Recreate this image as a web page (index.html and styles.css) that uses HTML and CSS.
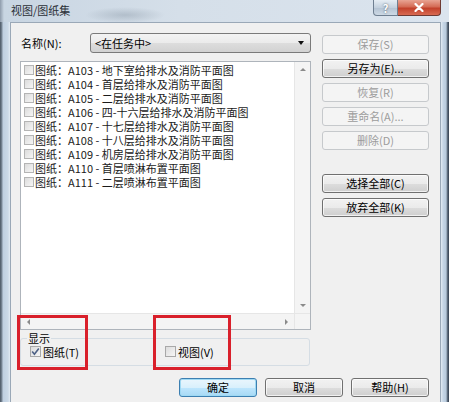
FILE: index.html
```html
<!DOCTYPE html>
<html lang="zh-CN">
  <head>
    <meta charset="UTF-8" />
    <title>视图/图纸集</title>
    <link rel="stylesheet" href="styles.css">
  </head>
  <body>
    <div class="window">
      <div class="titlebar">
        <span class="title">视图/图纸集</span>
        <div class="caption-buttons">
          <span class="cap-btn cap-help">?</span>
          <span class="cap-btn cap-close">
            <svg width="10" height="9" viewBox="0 0 10 9">
              <path d="M1.5 1 L8.5 8 M8.5 1 L1.5 8" stroke="#fff" stroke-width="2.2" stroke-linecap="round" />
            </svg>
          </span>
        </div>
      </div>

      <div class="frame">
        <div class="frame-left"></div>

        <div class="client">
          <div class="main">
            <div class="left-col">
              <div class="name-row">
                <label class="name-label">名称(N):</label>
                <div class="combo">
                  <span class="combo-text">&lt;在任务中&gt;</span>
                  <span class="arrow arrow-down dark"></span>
                </div>
              </div>

              <div class="listbox">
                <ul class="items">
                  <li><span class="chk"></span>图纸：A103 - 地下室给排水及消防平面图</li>
                  <li><span class="chk"></span>图纸：A104 - 首层给排水及消防平面图</li>
                  <li><span class="chk"></span>图纸：A105 - 二层给排水及消防平面图</li>
                  <li><span class="chk"></span>图纸：A106 - 四-十六层给排水及消防平面图</li>
                  <li><span class="chk"></span>图纸：A107 - 十七层给排水及消防平面图</li>
                  <li><span class="chk"></span>图纸：A108 - 十八层给排水及消防平面图</li>
                  <li><span class="chk"></span>图纸：A109 - 机房层给排水及消防平面图</li>
                  <li><span class="chk"></span>图纸：A110 - 首层喷淋布置平面图</li>
                  <li><span class="chk"></span>图纸：A111 - 二层喷淋布置平面图</li>
                </ul>
                <div class="vscroll">
                  <span class="arrow arrow-up"></span>
                  <span class="arrow arrow-down"></span>
                </div>
                <div class="hscroll">
                  <span class="arrow arrow-left"></span>
                  <span class="arrow arrow-right"></span>
                </div>
                <div class="corner"></div>
              </div>

              <fieldset class="display-group">
                <legend>显示</legend>
                <div class="check-row">
                  <label class="check-item">
                    <span class="chk chk-big checked">
                      <svg width="9" height="9" viewBox="0 0 9 9">
                        <path d="M1.2 4.6 L3.4 7.2 L7.8 1.4" fill="none" stroke="#4d6185" stroke-width="1.6" />
                      </svg>
                    </span>图纸(T)
                  </label>
                  <label class="check-item">
                    <span class="chk chk-big"></span>视图(V)
                  </label>
                </div>
              </fieldset>
            </div>

            <div class="right-col">
              <button class="btn" disabled>保存(S)</button>
              <button class="btn">另存为(E)...</button>
              <button class="btn" disabled>恢复(R)</button>
              <button class="btn" disabled>重命名(A)...</button>
              <button class="btn" disabled>删除(D)</button>
              <button class="btn btn-gap">选择全部(C)</button>
              <button class="btn">放弃全部(K)</button>
            </div>
          </div>

          <div class="bottom-buttons">
            <button class="btn btn-default">确定</button>
            <button class="btn">取消</button>
            <button class="btn">帮助(H)</button>
          </div>
        </div>

        <div class="frame-right"></div>
      </div>

      <!-- red annotation marks -->
      <div class="mark mark-sheets"></div>
      <div class="mark mark-views"></div>
    </div>
  </body>
</html>
```

FILE: styles.css
```css
* {
  box-sizing: border-box;
}

body {
  margin: 0;
  font-family: "Noto Sans CJK SC", "Liberation Sans", sans-serif;
  font-size: 11px;
  color: #000;
  background: #c9d6e3;
}

.window {
  position: relative;
  width: 449px;
  height: 402px;
  display: flex;
  flex-direction: column;
  overflow: hidden;
}

/* title bar */
.titlebar {
  height: 22px;
  display: flex;
  align-items: flex-start;
  background:
    radial-gradient(ellipse 40px 8px at 125px 15px, rgba(120, 135, 150, 0.35), transparent),
    linear-gradient(to right, #8e9bab 0, #c8d5e2 4px, #d5dfe9 40%, #dbe4ee 100%);
}

.title {
  padding: 3px 0 0 11px;
  line-height: 14px;
  color: #2a2f36;
}

.caption-buttons {
  margin-left: auto;
  margin-right: 8px;
  display: flex;
}

.cap-btn {
  height: 16px;
  display: flex;
  align-items: center;
  justify-content: center;
  border: 1px solid #6f7f91;
  border-top: none;
}

.cap-help {
  width: 25px;
  border-radius: 0 0 0 4px;
  background: linear-gradient(#e6edf4, #c4d1de 50%, #b3c2d2 51%, #cdd9e5);
  color: #fff;
  font-weight: bold;
  font-size: 11px;
  text-shadow: 0 0 2px #44505c;
}

.cap-close {
  width: 43px;
  border-left: none;
  border-color: #6e3a33;
  border-radius: 0 0 4px 0;
  background: linear-gradient(#e8a493, #d46b55 45%, #c2412b 55%, #d86a52);
}

/* frame */
.frame {
  flex: 1;
  display: flex;
}

.frame-left {
  width: 10px;
  background: linear-gradient(to right, #4a5663 0, #7f8d9c 2px, #bfcfe0 3px, #cbd9e7 8px, #e3ebf3 10px);
}

.frame-right {
  width: 8px;
  background: linear-gradient(to right, #e3ebf3 0, #c6d6e6 2px, #b8cadc 5px, #3f4c5c 7px);
}

.client {
  flex: 1;
  background: #f0f0f0;
  border: 1px solid #9aa8b7;
  border-bottom: none;
  padding: 10px 11px 0 9px;
}

.main {
  display: flex;
  gap: 11px;
}

.left-col {
  width: 291px;
}

.name-row {
  display: flex;
  align-items: center;
  height: 20px;
}

.name-label {
  width: 70px;
  padding-left: 1px;
}

.combo {
  flex: 1;
  height: 20px;
  display: flex;
  align-items: center;
  padding: 0 6px 0 4px;
  border: 1px solid #7a7a7a;
  border-radius: 3px;
  background: linear-gradient(#f3f3f3, #ebebeb 50%, #dddddd 51%, #d2d2d2);
}

.combo-text {
  flex: 1;
}

/* list */
.listbox {
  margin-top: 8px;
  height: 269px;
  border: 1px solid #aeb4bb;
  background: #fff;
  display: grid;
  grid-template-columns: 1fr 16px;
  grid-template-rows: 1fr 16px;
}

.items {
  list-style: none;
  margin: 0;
  padding: 1px 0 0 3px;
}

.items li {
  height: 14px;
  line-height: 14px;
  display: flex;
  align-items: center;
  white-space: nowrap;
  color: #1a1a1a;
}

.chk {
  width: 10px;
  height: 10px;
  margin-right: 1px;
  border: 1px solid #b4b4b4;
  background: linear-gradient(135deg, #dcdcdc, #f6f6f6);
  flex-shrink: 0;
}

.vscroll,
.hscroll,
.corner {
  background: #f4f4f4;
}

.vscroll {
  border-left: 1px solid #e6e6e6;
  display: flex;
  flex-direction: column;
  justify-content: space-between;
  align-items: center;
  padding: 6px 0 6px;
}

.hscroll {
  border-top: 1px solid #e6e6e6;
  display: flex;
  justify-content: space-between;
  align-items: center;
  padding: 0 6px;
}

.corner {
  border-top: 1px solid #e6e6e6;
  border-left: 1px solid #e6e6e6;
}

.arrow {
  width: 0;
  height: 0;
  border: 3px solid transparent;
}

.arrow-up {
  border-bottom: 3px solid #8a8a8a;
  border-top-width: 0;
}

.arrow-down {
  border-top: 3px solid #8a8a8a;
  border-bottom-width: 0;
}

.arrow-left {
  border-right: 3px solid #8a8a8a;
  border-left-width: 0;
}

.arrow-right {
  border-left: 3px solid #8a8a8a;
  border-right-width: 0;
}

.arrow-down.dark {
  border-width: 4px 3.5px 0;
  border-top-color: #111;
}

/* display group */
.display-group {
  margin: 1px 1px 0 0;
  height: 35px;
  padding: 0 0 0 6px;
  border: 1px solid #d5dde4;
  border-radius: 3px;
}

.display-group legend {
  padding: 0 1px;
  line-height: 14px;
}

.check-row {
  display: flex;
  height: 13px;
  align-items: center;
}

.check-item {
  display: flex;
  align-items: center;
}

.check-item:first-child {
  width: 138px;
  padding-left: 3px;
}

.chk-big {
  width: 11px;
  height: 11px;
  margin-right: 2px;
  border-color: #a8a8a8;
  display: flex;
  align-items: center;
  justify-content: center;
}

/* buttons */
.right-col {
  width: 107px;
  margin-top: 2px;
  display: flex;
  flex-direction: column;
  gap: 5px;
}

.btn {
  height: 19px;
  padding: 0;
  font: inherit;
  line-height: 17px;
  color: #000;
  border: 1px solid #707070;
  border-radius: 3px;
  background: linear-gradient(#f2f2f2, #ebebeb 50%, #dddddd 51%, #cfcfcf);
  box-shadow: inset 0 0 0 1px rgba(255, 255, 255, 0.7);
}

.btn:disabled {
  color: #9c9c9c;
  border-color: #c6c9cc;
  background: #f4f4f4;
  box-shadow: none;
}

.btn-gap {
  margin-top: 19px;
}

.bottom-buttons {
  margin-top: 12px;
  display: flex;
  justify-content: flex-end;
  gap: 8px;
}

.bottom-buttons .btn {
  width: 78px;
}

.btn-default {
  border-color: #3c7fb1;
  box-shadow: inset 0 0 0 1px #9fd9f3;
  background: linear-gradient(#eaf6fd, #d9f0fc 50%, #bee6fd 51%, #a7d9f5);
}

/* red annotation marks */
.mark {
  position: absolute;
  top: 315px;
  height: 55px;
  border: 3px solid #d9202b;
}

.mark-sheets {
  left: 17px;
  width: 71px;
}

.mark-views {
  left: 153px;
  width: 78px;
}
```
